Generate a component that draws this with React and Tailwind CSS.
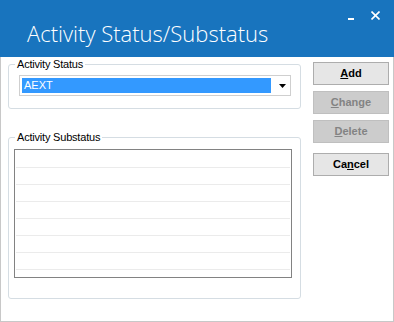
import React from "react";

function Btn({ children, disabled }) {
  return (
    <button
      className={
        disabled
          ? "w-[76px] h-[23px] border border-[#bfbfbf] bg-[#cccccc] text-[#838383] text-[11px] font-bold leading-none"
          : "w-[76px] h-[23px] border border-[#adadad] bg-[#e6e6e6] text-black text-[11px] font-bold leading-none"
      }
      style={{ fontFamily: '"Liberation Sans", Arial, sans-serif' }}
    >
      {children}
    </button>
  );
}

export default function App() {
  const rows = [0, 1, 2, 3, 4, 5, 6];
  return (
    <div
      className="w-[394px] h-[322px] flex flex-col bg-white"
      style={{ fontFamily: '"Liberation Sans", Arial, sans-serif' }}
    >
      <div className="h-[57px] bg-[#1874be] flex items-start relative">
        <div
          className="text-white font-light text-[22px] leading-none pl-[27px] pt-[22px]"
          style={{ fontFamily: '"Open Sans", "Noto Sans", sans-serif' }}
        >
          Activity Status/Substatus
        </div>
        <div className="absolute left-[348px] top-[18px] w-[6px] h-[2px] bg-white" />
        <svg className="absolute left-[371px] top-[11px]" width="9" height="9" viewBox="0 0 9 9">
          <path d="M0.5 0.5L8.5 8.5M8.5 0.5L0.5 8.5" stroke="white" strokeWidth="1.6" />
        </svg>
      </div>
      <div className="flex-1 flex border-l border-r border-b border-[#c8c8c8]">
        <div className="w-[293px] ml-[7px] flex flex-col">
          <div className="relative mt-[7px] h-[45px] border border-[#d5dde3] rounded-[3px] pt-[10px] pl-[10px] pr-[9px]">
            <span className="absolute -top-[7px] left-[6px] bg-white px-[2px] text-[11px] leading-[13px] text-black tracking-[-0.2px]">
              Activity Status
            </span>
            <div className="h-[21px] w-[272px] border border-[#cfcfcf] flex items-center p-[2px]">
              <div className="h-[15px] w-[249px] bg-[#3399ff] text-white text-[11px] leading-[15px] pl-[2px]">
                AEXT
              </div>
              <svg className="ml-[8px]" width="7" height="4" viewBox="0 0 7 4">
                <path d="M0 0H7L3.5 4Z" fill="black" />
              </svg>
            </div>
          </div>
          <div className="relative mt-[28px] h-[162px] border border-[#d5dde3] rounded-[3px] pt-[11px] pl-[5px]">
            <span className="absolute -top-[7px] left-[6px] bg-white px-[2px] text-[11px] leading-[13px] text-black tracking-[-0.2px]">
              Activity Substatus
            </span>
            <div className="w-[278px] h-[129px] border border-[#828282] p-[1px] overflow-hidden">
              {rows.map((r) => (
                <div key={r} className="h-[17px] border-b border-[#ebebeb]" />
              ))}
            </div>
          </div>
        </div>
        <div className="ml-[12px] flex flex-col pt-[5px]">
          <Btn>
            <u>A</u>dd
          </Btn>
          <div className="h-[6px]" />
          <Btn disabled>
            <u>C</u>hange
          </Btn>
          <div className="h-[6px]" />
          <Btn disabled>
            <u>D</u>elete
          </Btn>
          <div className="h-[10px]" />
          <Btn>
            Ca<u>n</u>cel
          </Btn>
        </div>
      </div>
    </div>
  );
}
